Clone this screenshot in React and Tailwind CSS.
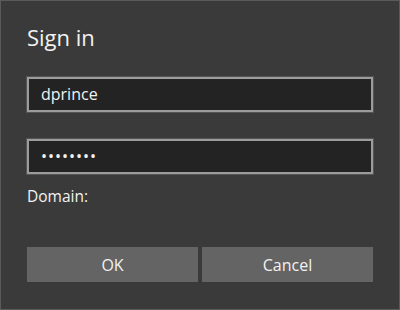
import React from "react";

const font = { fontFamily: '"Open Sans", "Noto Sans", sans-serif' };

const Field = ({ children }) => (
  <div className="h-[35px] border-2 border-[#9c9c9c] bg-[#232323] pl-[12px] shadow-[0_0_0_1px_#555555] text-[16px] leading-[31px] text-[#f2f2f2]">
    {children}
  </div>
);

const App = () => {
  return (
    <div
      className="w-[400px] h-[310px] border border-[#5a5a5a] bg-[#3a3a3a] px-[26px] pt-[21px] text-[#f2f2f2]"
      style={font}
    >
      <h1 className="text-[22px] leading-[30px]">Sign in</h1>

      <div className="mt-[25px]">
        <Field>dprince</Field>
      </div>
      <div className="mt-[27px]">
        <Field>
          <span className="tracking-[1px]">••••••••</span>
        </Field>
      </div>

      <p className="mt-[12px] text-[15.5px] leading-[20px]">Domain:</p>

      <div className="mt-[41px] grid grid-cols-2 gap-[4px]">
        <button className="h-[35px] bg-[#646464] text-[16px] text-[#f2f2f2]">OK</button>
        <button className="h-[35px] bg-[#646464] text-[16px] text-[#f2f2f2]">Cancel</button>
      </div>
    </div>
  );
};

export default App;
